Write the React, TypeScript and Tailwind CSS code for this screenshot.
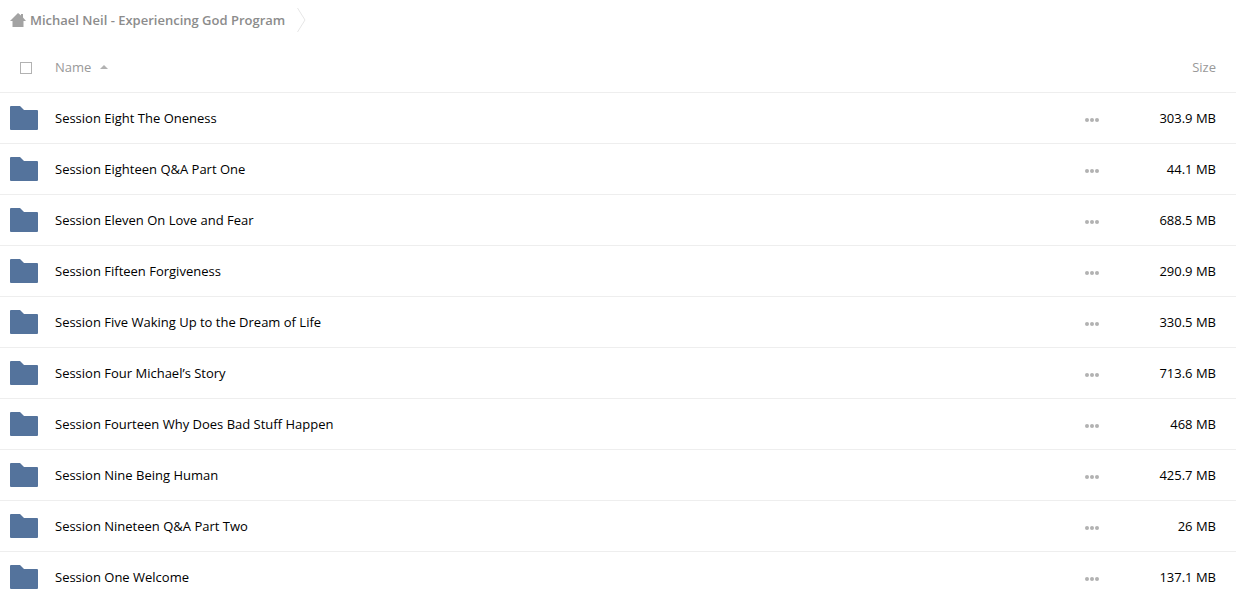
import { useState } from "react";
import clsx from "clsx";

interface Folder {
  name: string;
  size: string;
}

const FOLDERS: Folder[] = [
  { name: "Session Eight The Oneness", size: "303.9 MB" },
  { name: "Session Eighteen Q&A Part One", size: "44.1 MB" },
  { name: "Session Eleven On Love and Fear", size: "688.5 MB" },
  { name: "Session Fifteen Forgiveness", size: "290.9 MB" },
  { name: "Session Five Waking Up to the Dream of Life", size: "330.5 MB" },
  { name: "Session Four Michael’s Story", size: "713.6 MB" },
  { name: "Session Fourteen Why Does Bad Stuff Happen", size: "468 MB" },
  { name: "Session Nine Being Human", size: "425.7 MB" },
  { name: "Session Nineteen Q&A Part Two", size: "26 MB" },
  { name: "Session One Welcome", size: "137.1 MB" },
];

function HomeIcon() {
  return (
    <svg width="16" height="14" viewBox="0 0 16 14" fill="#a3a3a3" aria-hidden="true">
      <path d="M8 0 11 2.6V1h2v3.6L16 8h-2.5v6h-11V8H0z" />
    </svg>
  );
}

function CrumbSeparator() {
  return (
    <svg width="9" height="24" viewBox="0 0 9 24" fill="none" stroke="#e6e6e6" aria-hidden="true">
      <path d="M.5 0 8 12 .5 24" />
    </svg>
  );
}

function FolderIcon() {
  return (
    <svg className="block" width="28" height="24" viewBox="0 0 28 24" fill="#54739c" aria-hidden="true">
      <path d="M1 0h9l4 4h13a1 1 0 0 1 1 1v18a1 1 0 0 1-1 1H1a1 1 0 0 1-1-1V1a1 1 0 0 1 1-1z" />
    </svg>
  );
}

function MoreIcon() {
  return (
    <svg className="block" width="14" height="4" viewBox="0 0 14 4" fill="#b2b2b2" aria-hidden="true">
      <circle cx="2" cy="2" r="2" />
      <circle cx="7" cy="2" r="2" />
      <circle cx="12" cy="2" r="2" />
    </svg>
  );
}

export default function App() {
  const [ascending, setAscending] = useState(true);
  const folders = ascending ? FOLDERS : [...FOLDERS].reverse();

  return (
    <main className="min-h-screen bg-white font-['Open_Sans',sans-serif] text-[13px] leading-5 text-black">
      <nav className="flex h-10 items-center px-[10px]" aria-label="Breadcrumb">
        <a href="#" className="flex items-center gap-1 font-semibold text-[#8c8c8c]">
          <HomeIcon />
          Michael Neil - Experiencing God Program
        </a>
        <span className="ml-3">
          <CrumbSeparator />
        </span>
      </nav>

      <table className="mt-[2px] w-full table-fixed border-separate border-spacing-0">
        <thead>
          <tr className="h-[51px] text-[#999999]">
            <th className="w-[55px] border-b border-[#eeeeee] pt-[2px] pl-5">
              <input
                type="checkbox"
                aria-label="Select all"
                className="block size-3 appearance-none border border-[#b2b2b2] bg-white checked:bg-[#b2b2b2]"
              />
            </th>
            <th className="border-b border-[#eeeeee] text-left font-normal">
              <button className="flex items-center gap-[9px]" onClick={() => setAscending(!ascending)}>
                Name
                <svg
                  className={clsx("block", !ascending && "rotate-180")}
                  width="8"
                  height="4"
                  viewBox="0 0 8 4"
                  fill="#b2b2b2"
                  aria-hidden="true"
                >
                  <path d="M4 0 8 4H0z" />
                </svg>
              </button>
            </th>
            <th className="w-12 border-b border-[#eeeeee]" />
            <th className="w-[120px] border-b border-[#eeeeee] pr-5 text-right font-normal">Size</th>
          </tr>
        </thead>

        <tbody>
          {folders.map((folder) => (
            <tr key={folder.name} className="h-[51px]">
              <td className="border-b border-[#eeeeee] pl-[10px]">
                <FolderIcon />
              </td>
              <td className="truncate border-b border-[#eeeeee]">
                <a href="#">{folder.name}</a>
              </td>
              <td className="border-b border-[#eeeeee]">
                <button
                  className="mx-auto flex h-6 w-8 items-end justify-center pb-2"
                  aria-label={`Actions for ${folder.name}`}
                >
                  <MoreIcon />
                </button>
              </td>
              <td className="border-b border-[#eeeeee] pr-5 text-right">{folder.size}</td>
            </tr>
          ))}
        </tbody>
      </table>
    </main>
  );
}
